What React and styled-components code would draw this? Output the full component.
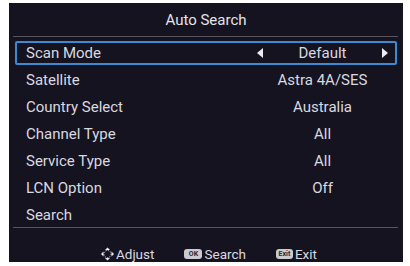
import React from 'react'
import styled, { createGlobalStyle } from 'styled-components'

const Global = createGlobalStyle`
  body {
    margin: 0;
    background: #ffffff;
    font-family: Roboto, "Liberation Sans", sans-serif;
  }
`

const Panel = styled.div`
  margin: 3px 0 0 9px;
  width: 394px;
  height: 259px;
  background: #15131f;
  color: #d9d9e0;
  display: flex;
  flex-direction: column;
`

const Title = styled.div`
  height: 33px;
  display: flex;
  align-items: center;
  justify-content: center;
  font-size: 15px;
  color: #e4e4ea;
`

const Divider = styled.div`
  height: 1px;
  margin: 0 5px 0 4px;
  background: #55545f;
`

const List = styled.div`
  padding: 4px 6px 0 6px;
  display: flex;
  flex-direction: column;
  gap: 3px;
  height: 190px;
  box-sizing: border-box;
`

const Row = styled.div`
  height: 24px;
  box-sizing: border-box;
  border: 2px solid ${p => (p.$selected ? '#3b8bd2' : 'transparent')};
  border-radius: 2px;
  display: flex;
  align-items: center;
  padding-left: 9px;
  font-size: 15px;
`

const Label = styled.span`
  flex: 1;
`

const Value = styled.div`
  width: 136px;
  margin-right: 4px;
  display: flex;
  align-items: center;
  justify-content: ${p => (p.$arrows ? 'space-between' : 'center')};
  padding: 0 3px 0 2px;
  box-sizing: border-box;
`

const Arrow = styled.span`
  width: 0;
  height: 0;
  border-top: 5px solid transparent;
  border-bottom: 5px solid transparent;
  ${p => (p.$dir === 'left' ? 'border-right: 6px solid #ececf0;' : 'border-left: 6px solid #ececf0;')}
`

const Footer = styled.div`
  flex: 1;
  display: flex;
  align-items: flex-end;
  justify-content: center;
  padding-bottom: 0;
  gap: 30px;
  font-size: 13.5px;
  padding-left: 6px;
`

const Hint = styled.div`
  display: flex;
  align-items: center;
  gap: 2px;
`

const Key = styled.span`
  display: inline-flex;
  align-items: center;
  justify-content: center;
  height: 10px;
  min-width: ${p => p.$w || 18}px;
  border-radius: 3px;
  background: #c9c9cf;
  color: #2a2a33;
  font-size: 7px;
  font-weight: 700;
  line-height: 1;
`

const rows = [
  { label: 'Scan Mode', value: 'Default', selected: true },
  { label: 'Satellite', value: 'Astra 4A/SES' },
  { label: 'Country Select', value: 'Australia' },
  { label: 'Channel Type', value: 'All' },
  { label: 'Service Type', value: 'All' },
  { label: 'LCN Option', value: 'Off' },
  { label: 'Search' }
]

const MoveIcon = () => (
  <svg width="13" height="14" viewBox="0 0 13 14">
    <circle cx="6.5" cy="7" r="3.6" fill="none" stroke="#d9d9e0" strokeWidth="1" strokeDasharray="1.2 1.2" />
    <path d="M6.5 0.5 L9 3 L4 3 Z" fill="#ececf0" />
    <path d="M6.5 13.5 L9 11 L4 11 Z" fill="#ececf0" />
    <path d="M0 7 L2.5 4.5 L2.5 9.5 Z" fill="#ececf0" />
    <path d="M13 7 L10.5 4.5 L10.5 9.5 Z" fill="#ececf0" />
  </svg>
)

export default function App() {
  return (
    <>
      <Global />
      <Panel>
        <Title>Auto Search</Title>
        <Divider />
        <List>
          {rows.map(r => (
            <Row key={r.label} $selected={r.selected}>
              <Label>{r.label}</Label>
              {r.value && (
                <Value $arrows={r.selected}>
                  {r.selected && <Arrow $dir="left" />}
                  <span>{r.value}</span>
                  {r.selected && <Arrow $dir="right" />}
                </Value>
              )}
            </Row>
          ))}
        </List>
        <Divider />
        <Footer>
          <Hint>
            <MoveIcon />
            <span>Adjust</span>
          </Hint>
          <Hint>
            <Key $w={18}>OK</Key>
            <span>Search</span>
          </Hint>
          <Hint>
            <Key $w={17}>Exit</Key>
            <span>Exit</span>
          </Hint>
        </Footer>
      </Panel>
    </>
  )
}
